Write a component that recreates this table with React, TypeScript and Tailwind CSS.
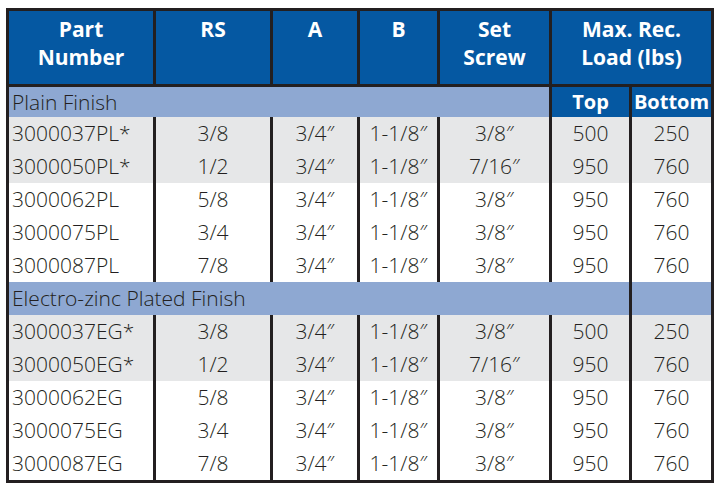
import React from "react";

const font = { fontFamily: '"Open Sans", "Noto Sans", sans-serif' };

type Row = { pn: string; rs: string; a: string; b: string; set: string; top: string; bottom: string; hl?: boolean };

const plain: Row[] = [
  { pn: "3000037PL*", rs: "3/8", a: "3/4″", b: "1-1/8″", set: "3/8″", top: "500", bottom: "250", hl: true },
  { pn: "3000050PL*", rs: "1/2", a: "3/4″", b: "1-1/8″", set: "7/16″", top: "950", bottom: "760", hl: true },
  { pn: "3000062PL", rs: "5/8", a: "3/4″", b: "1-1/8″", set: "3/8″", top: "950", bottom: "760" },
  { pn: "3000075PL", rs: "3/4", a: "3/4″", b: "1-1/8″", set: "3/8″", top: "950", bottom: "760" },
  { pn: "3000087PL", rs: "7/8", a: "3/4″", b: "1-1/8″", set: "3/8″", top: "950", bottom: "760" },
];

const zinc: Row[] = [
  { pn: "3000037EG*", rs: "3/8", a: "3/4″", b: "1-1/8″", set: "3/8″", top: "500", bottom: "250", hl: true },
  { pn: "3000050EG*", rs: "1/2", a: "3/4″", b: "1-1/8″", set: "7/16″", top: "950", bottom: "760", hl: true },
  { pn: "3000062EG", rs: "5/8", a: "3/4″", b: "1-1/8″", set: "3/8″", top: "950", bottom: "760" },
  { pn: "3000075EG", rs: "3/4", a: "3/4″", b: "1-1/8″", set: "3/8″", top: "950", bottom: "760" },
  { pn: "3000087EG", rs: "7/8", a: "3/4″", b: "1-1/8″", set: "3/8″", top: "950", bottom: "760" },
];

function DataRow({ r }: { r: Row }) {
  const bg = r.hl ? "bg-[#e6e7e8]" : "bg-white";
  const cell = `${bg} h-[33px] flex items-center justify-center text-[21px] font-light text-[#231f20] leading-none`;
  return (
    <>
      <div className={`${bg} h-[33px] flex items-center pl-[3px] text-[21px] font-light text-[#231f20] leading-none`}>{r.pn}</div>
      <div className={cell}>{r.rs}</div>
      <div className={cell}>{r.a}</div>
      <div className={cell}>{r.b}</div>
      <div className={cell}>{r.set}</div>
      <div className={cell}>{r.top}</div>
      <div className={cell}>{r.bottom}</div>
    </>
  );
}

const head = "bg-[#0558a2] h-[76px] border-b-[3px] border-[#231f20] pt-[4px] text-center text-white font-bold text-[21px] leading-[28px]";

export default function App() {
  return (
    <div className="bg-white w-[727px] h-[486px] pt-[8px] pl-[6px]" style={font}>
      <div className="grid grid-cols-[144px_114px_84px_77px_109px_77px_79px] gap-x-[3px] bg-[#231f20] border-[3px] border-[#231f20] w-[708px]">
        <div className={head}>Part<br />Number</div>
        <div className={head}>RS</div>
        <div className={head}>A</div>
        <div className={head}>B</div>
        <div className={head}>Set<br />Screw</div>
        <div className={`${head} col-span-2`}>Max. Rec.<br />Load (lbs)</div>

        <div className="col-span-5 bg-[#8ea8d2] h-[30px] flex items-center pl-[3px] text-[21px] font-light text-[#231f20] leading-none">Plain Finish</div>
        <div className="bg-[#0558a2] h-[30px] flex items-center justify-center text-white font-bold text-[20px] leading-none">Top</div>
        <div className="bg-[#0558a2] h-[30px] flex items-center justify-center text-white font-bold text-[20px] leading-none">Bottom</div>

        {plain.map((r) => <DataRow key={r.pn} r={r} />)}

        <div className="col-span-6 bg-[#8ea8d2] h-[33px] flex items-center pl-[3px] text-[21px] font-light text-[#231f20] leading-none">Electro-zinc Plated Finish</div>
        <div className="bg-[#8ea8d2] h-[33px]"></div>

        {zinc.map((r) => <DataRow key={r.pn} r={r} />)}
      </div>
    </div>
  );
}
